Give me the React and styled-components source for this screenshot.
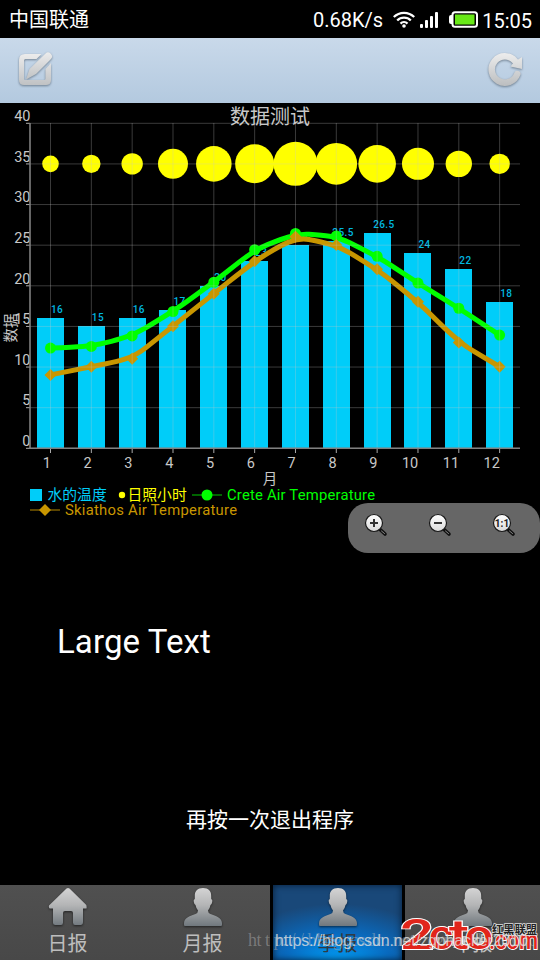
import React from "react";
import styled, { createGlobalStyle } from "styled-components";

const water = [16, 15, 16, 17, 20, 23, 25, 25.5, 26.5, 24, 22, 18];
const sunRadius = [8.3, 9.2, 10.7, 15, 17.8, 19.5, 22, 20.8, 18.8, 16, 13.2, 10.2];
const crete = [12.3, 12.5, 13.8, 16.8, 20.4, 24.4, 26.4, 26.1, 23.6, 20.3, 17.2, 13.9];
const skiathos = [9, 10, 11, 15, 19, 23, 26, 25, 22, 18, 13, 10];
const ticks = [0, 5, 10, 15, 20, 25, 30, 35, 40];

const px = (i) => 50.5 + i * 40.83;
const py = (v) => 345 - v * 8.125;

// each segment bends around the data point and ends a third of the way to the next
function smoothPath(values) {
  const points = values.map((v, i) => [px(i), py(v)]);
  const mix = (a, b, t) => [a[0] + (b[0] - a[0]) * t, a[1] + (b[1] - a[1]) * t];
  let d = `M${points[0].join(" ")}`;
  for (let i = 0; i < points.length - 1; i++) {
    const next = points[i + 1];
    const after = points[i + 2] || next;
    const c1 = mix(points[i], next, 0.67);
    const end = mix(next, after, 0.33);
    d += ` C${c1.join(" ")} ${next.join(" ")} ${end.join(" ")}`;
  }
  return d;
}

function Diamond({ x, y, r = 6 }) {
  return (
    <path
      d={`M${x} ${y - r}L${x + r} ${y}L${x} ${y + r}L${x - r} ${y}Z`}
      fill="#c89600"
    />
  );
}

function Chart() {
  return (
    <ChartSvg width="540" height="417" viewBox="0 0 540 417">
      {water.map((v, i) => (
        <g key={i}>
          <rect
            x={Math.round(px(i) - 13.6)}
            y={Math.round(py(v))}
            width={27}
            height={345 - Math.round(py(v))}
            fill="#00cdf9"
          />
          <BarValue x={px(i) + (v % 1 ? -4 : 0.5)} y={py(v) - 5}>
            {v}
          </BarValue>
        </g>
      ))}
      {sunRadius.map((r, i) => (
        <circle key={i} cx={px(i)} cy={py(35) + 0.2} r={r} fill="#ffff00" />
      ))}
      <path d={smoothPath(crete)} fill="none" stroke="#00ff00" strokeWidth="5" />
      {crete.map((v, i) => (
        <circle key={i} cx={px(i)} cy={py(v)} r="5.5" fill="#00ff00" />
      ))}
      <path d={smoothPath(skiathos)} fill="none" stroke="#c89600" strokeWidth="5" />
      {skiathos.map((v, i) => (
        <Diamond key={i} x={px(i)} y={py(v)} />
      ))}

      {ticks.map((v) => (
        <g key={v}>
          <line x1="30" x2="520" y1={py(v) + 0.3} y2={py(v) + 0.3} stroke="#c8c8c8" strokeOpacity="0.29" />
          <line x1="26" x2="30" y1={py(v) + 0.3} y2={py(v) + 0.3} stroke="#aaa" />
          <AxisText x="30.5" y={py(v) - 2} textAnchor="end">
            {v}
          </AxisText>
        </g>
      ))}
      {water.map((_, i) => (
        <g key={i}>
          <line x1={px(i)} x2={px(i)} y1="20" y2="345" stroke="#c8c8c8" strokeOpacity="0.29" />
          <line x1={px(i)} x2={px(i)} y1="345" y2="350" stroke="#aaa" />
          <AxisText x={px(i) + 0.3} y="365" textAnchor="end">
            {i + 1}
          </AxisText>
        </g>
      ))}
      <line x1="30" x2="30" y1="20" y2="346" stroke="#808080" strokeWidth="1.6" />
      <line x1="29" x2="520" y1="345.2" y2="345.2" stroke="#808080" strokeWidth="1.6" />

      <ChartTitle x="270" y="21" textAnchor="middle">数据测试</ChartTitle>
      <AxisText x="270" y="381" textAnchor="middle">月</AxisText>
      <AxisText transform="translate(15.5 225) rotate(-90)" textAnchor="middle">
        数据
      </AxisText>

      <rect x="30" y="386" width="12" height="12" fill="#00cdf9" />
      <LegendText x="47.5" y="397" fill="#00cdf9">水的温度</LegendText>
      <circle cx="122" cy="392" r="3.2" fill="#ffff00" />
      <LegendText x="127.5" y="397" fill="#ffff00">日照小时</LegendText>
      <line x1="192" x2="222" y1="392" y2="392" stroke="#00a800" strokeWidth="1.2" />
      <circle cx="207" cy="392" r="5.5" fill="#00ff00" />
      <LegendText x="227" y="397" fill="#00ff00" textLength="148">
        Crete Air Temperature
      </LegendText>
      <line x1="30" x2="60" y1="407" y2="407" stroke="#9a7400" strokeWidth="1.2" />
      <Diamond x={45} y={407} />
      <LegendText x="65" y="412" fill="#c89600" textLength="172">
        Skiathos Air Temperature
      </LegendText>
    </ChartSvg>
  );
}

function EditIcon() {
  return (
    <HeaderIcon width="38" height="40" viewBox="0 0 38 40">
      <defs>
        <linearGradient id="silver" x1="0" y1="0" x2="0" y2="1">
          <stop offset="0" stopColor="#ececec" />
          <stop offset="1" stopColor="#c0c2c4" />
        </linearGradient>
      </defs>
      <path
        fill="url(#silver)"
        d="M8 2H24.500L19.500 7H8.500Q7 7 7 8.500V27Q7 28 8.500 28H27Q28.500 28 28.500 26.500V17L34 11V28Q34 33 29 33H7Q2 33 2 28V8Q2 2 8 2Z"
      />
      <path
        fill="url(#silver)"
        d="M28.500 1.500Q31 -1 33.500 1.500Q36.500 4 34 7L19 22L9 27.500L12.500 17Z"
      />
    </HeaderIcon>
  );
}

function RefreshIcon() {
  return (
    <HeaderIcon width="36" height="40" viewBox="0 0 36 40">
      <defs>
        <linearGradient id="ring" gradientUnits="userSpaceOnUse" x1="0" y1="1" x2="0" y2="35">
          <stop offset="0" stopColor="#ededed" />
          <stop offset="1" stopColor="#babcbe" />
        </linearGradient>
      </defs>
      <path
        d="M29.300 22A13.200 13.200 0 1 1 27 9"
        fill="none"
        stroke="url(#ring)"
        strokeWidth="6.500"
        strokeLinecap="round"
      />
      <path d="M34 5V17L22.500 14.500L26 10Z" fill="url(#ring)" />
    </HeaderIcon>
  );
}

function WifiIcon() {
  return (
    <svg width="22" height="17" viewBox="0 0 22 17">
      <g fill="none" stroke="#fff" strokeWidth="2.300">
        <path d="M.8 6A14.500 14.500 0 0 1 21.200 6" />
        <path d="M4.200 9.500A9.600 9.600 0 0 1 17.800 9.500" />
        <path d="M7.500 12.600A5 5 0 0 1 14.500 12.600" />
      </g>
      <circle cx="11" cy="15" r="1.800" fill="#fff" />
    </svg>
  );
}

function SignalIcon() {
  return (
    <svg width="18" height="17" viewBox="0 0 18 17" fill="#fff">
      <rect x="0" y="13" width="3" height="4" rx="1" />
      <rect x="5" y="9" width="3" height="8" rx="1" />
      <rect x="10" y="5" width="3" height="12" rx="1" />
      <rect x="15" y="1" width="3" height="16" rx="1" />
    </svg>
  );
}

function BatteryIcon() {
  return (
    <svg width="29" height="17" viewBox="0 0 29 17">
      <rect x="0" y="4" width="5" height="9" rx="2" fill="#fff" />
      <rect x="3.500" y="1.200" width="24.500" height="14.600" rx="2.500" fill="#000" stroke="#fff" strokeWidth="2" />
      <rect x="6" y="3.500" width="19.500" height="10" fill="#68e817" />
    </svg>
  );
}

function MagnifierIcon({ kind }) {
  return (
    <svg width="24" height="24" viewBox="0 0 24 24">
      <path d="M15.500 16L21 21" stroke="#111" strokeWidth="3.600" strokeLinecap="round" />
      <path d="M17.500 18L20.500 20.500" stroke="#888" strokeWidth="1" strokeLinecap="round" />
      <circle cx="10" cy="10" r="8.500" fill="url(#lens)" stroke="#191919" strokeWidth="1.200" />
      <defs>
        <linearGradient id="lens" x1="0" y1="0" x2="0" y2="1">
          <stop offset="0" stopColor="#fff" />
          <stop offset="1" stopColor="#dadada" />
        </linearGradient>
      </defs>
      {kind !== "reset" && <path d="M6 10H14" stroke="#333" strokeWidth="2" />}
      {kind === "in" && <path d="M10 6V14" stroke="#333" strokeWidth="2" />}
      {kind === "reset" && (
        <LensText x="10" y="13.500" textAnchor="middle">
          1:1
        </LensText>
      )}
    </svg>
  );
}

function TabIcon({ home }) {
  return (
    <IconShadow width="40" height="40" viewBox="0 0 40 40">
      <defs>
        <linearGradient id="steel" gradientUnits="userSpaceOnUse" x1="0" y1="0" x2="0" y2="40">
          <stop offset="0" stopColor="#d6d6d6" />
          <stop offset="0.45" stopColor="#b4b5b6" />
          <stop offset="1" stopColor="#6d757b" />
        </linearGradient>
      </defs>
      {home ? (
        <path
          fill="url(#steel)"
          d="M18.500 1.600Q20 .5 21.500 1.600L38.300 18Q39 21 38.300 21.500H35V35Q35 38 32.500 38H27Q25 38 25 35.500V26Q25 24 23 24H17Q15 24 15 26V35.500Q15 38 13 38H7.500Q5 38 5 35.500V21.500H1.700Q.5 21 1 18.500Z"
        />
      ) : (
        <path
          fill="url(#steel)"
          d="M20 1C25.500 1 28.500 4 28.200 9.500V12Q29.800 12.500 29.200 15Q28.800 17.500 27.500 18Q27 21 25 23.500Q25 26 27.500 27C33 29 38.500 30.500 39 36V38Q39 39 38 39H2Q1 39 1 38V36C1.500 30.500 7 29 12.500 27Q15 26 15 23.500Q13 21 12.500 18Q11.200 17.500 10.800 15Q10.200 12.500 11.800 12V9.500C11.500 4 14.500 1 20 1Z"
        />
      )}
    </IconShadow>
  );
}

const tabs = [
  { label: "日报", home: true },
  { label: "月报" },
  { label: "季报", active: true },
  { label: "年报" },
];

const serifUrl = "http://blog.csdn.net/zgphacker2010";
const serifX = serifUrl.split("").map((_, i) => 8 + i * 8.5).join(" ");

function App() {
  return (
    <Screen>
      <GlobalStyle />
      <StatusBar>
        <Carrier>中国联通</Carrier>
        <Speed>0.68K/s</Speed>
        <StatusIcons>
          <WifiIcon />
          <SignalIcon />
          <BatteryIcon />
        </StatusIcons>
        <Clock>15:05</Clock>
      </StatusBar>
      <Header>
        <EditIcon />
        <RefreshIcon />
      </Header>
      <Chart />
      <ZoomControls>
        <MagnifierIcon kind="in" />
        <MagnifierIcon kind="out" />
        <MagnifierIcon kind="reset" />
      </ZoomControls>
      <LargeText>Large Text</LargeText>
      <Toast>再按一次退出程序</Toast>
      <TabBar>
        {tabs.map((tab) => (
          <Tab key={tab.label} $active={tab.active}>
            <TabIcon home={tab.home} />
            <TabLabel $active={tab.active}>{tab.label}</TabLabel>
          </Tab>
        ))}
      </TabBar>
      <Watermark width="300" height="50" viewBox="0 0 300 50">
        <SerifMark x={serifX} y="36">{serifUrl}</SerifMark>
        <Logo>
          <text x="160" y="38.500" fontSize="42" textLength="34" lengthAdjust="spacingAndGlyphs">2</text>
          <text x="189" y="38.500" fontSize="40" textLength="24" lengthAdjust="spacingAndGlyphs">c</text>
          <text x="209" y="38.500" fontSize="40" textLength="20" lengthAdjust="spacingAndGlyphs">t</text>
          <text x="225" y="38.500" fontSize="41" textLength="28" lengthAdjust="spacingAndGlyphs">o</text>
          <text x="249" y="38.500" fontSize="25" textLength="49" lengthAdjust="spacingAndGlyphs">.com</text>
        </Logo>
        <LogoCaption x="252" y="23.500" textLength="45">红黑联盟</LogoCaption>
        <SansMark x="35" y="36" textLength="253">https://blog.csdn.net/zgphacker2010</SansMark>
      </Watermark>
    </Screen>
  );
}

export default App;

const GlobalStyle = createGlobalStyle`
  body {
    margin: 0;
    background: #000;
    font-family: Roboto, "Noto Sans CJK SC", sans-serif;
  }
`;

const Screen = styled.div`
  position: relative;
  display: flex;
  flex-direction: column;
  width: 540px;
  height: 960px;
  overflow: hidden;
  background: #000;
`;

const StatusBar = styled.div`
  display: flex;
  align-items: center;
  box-sizing: border-box;
  height: 38px;
  padding: 0 8px 0 9px;
  color: #fff;
  font-size: 20px;
  line-height: 38px;
`;

const Carrier = styled.span`
  flex: 1;
  padding-top: 2px;
`;

const Speed = styled.span`
  margin-right: 10px;
  padding-top: 2px;
`;

const StatusIcons = styled.div`
  display: flex;
  align-items: center;
  margin-right: 4px;
  padding-top: 1px;

  svg + svg {
    margin-left: 5px;
  }
  svg:last-child {
    margin-left: 11px;
  }
`;

const Clock = styled.span`
  padding-top: 3px;
`;

const Header = styled.header`
  display: flex;
  justify-content: space-between;
  box-sizing: border-box;
  height: 65px;
  padding: 14px 16px 0 17px;
  background: linear-gradient(#c9d9ea, #b3c9df);
`;

const HeaderIcon = styled.svg`
  overflow: visible;
  filter: drop-shadow(0 1px 1px rgba(60, 75, 90, 0.6));
`;

const ChartSvg = styled.svg`
  display: block;
  flex: none;
`;

const AxisText = styled.text`
  font-size: 14.5px;
  fill: #c8c8c8;
`;

const ChartTitle = styled.text`
  font-size: 20px;
  fill: #c8c8c8;
`;

const BarValue = styled.text`
  font-size: 10px;
  font-weight: 500;
  letter-spacing: 0.4px;
  fill: #00b8e0;
`;

const LegendText = styled.text`
  font-size: 14.8px;
`;

const ZoomControls = styled.div`
  display: flex;
  align-self: flex-end;
  flex: none;
  gap: 40px;
  box-sizing: border-box;
  width: 192px;
  height: 50px;
  margin-top: -17px;
  padding: 10px 0 0 16px;
  border-radius: 20px;
  background: #666;
`;

const LensText = styled.text`
  font-size: 10px;
  font-weight: 700;
  fill: #222;
`;

const LargeText = styled.p`
  margin: 68px 0 0 57px;
  color: #fff;
  font-size: 33px;
  line-height: 42px;
  letter-spacing: 0.1px;
`;

const Toast = styled.p`
  margin: 142px 0 0;
  color: #fff;
  font-size: 21px;
  line-height: 30px;
  text-align: center;
`;

const TabBar = styled.nav`
  display: flex;
  flex: none;
  height: 75px;
  margin-top: auto;
  background: linear-gradient(#505050, #484848);
`;

const Tab = styled.div`
  display: flex;
  flex: none;
  flex-direction: column;
  align-items: center;
  box-sizing: border-box;
  width: 135px;
  padding-top: 2px;
  border: solid #000;
  border-width: ${(props) => (props.$active ? "0 3px" : "0")};
  background: ${(props) =>
    props.$active
      ? "radial-gradient(ellipse 85% 80% at 50% 105%, #00a5ff, #096bc0 50%, #194879)"
      : "none"};
  box-shadow: ${(props) => (props.$active ? "inset 0 0 7px #061d36" : "none")};
`;

const IconShadow = styled.svg`
  flex: none;
  filter: drop-shadow(0 1px 1px rgba(0, 0, 0, 0.55));
`;

const TabLabel = styled.span`
  color: ${(props) => (props.$active ? "#303a43" : "#bdbdbd")};
  font-size: 20px;
  line-height: 34px;
`;

const Watermark = styled.svg`
  position: absolute;
  right: 0;
  bottom: 0;
`;

const SerifMark = styled.text`
  font-family: "Liberation Serif", serif;
  font-size: 18px;
  fill: rgba(190, 190, 190, 0.42);
`;

const SansMark = styled.text`
  font-family: "Liberation Sans", sans-serif;
  font-size: 16px;
  fill: rgba(225, 225, 225, 0.8);
`;

const Logo = styled.g`
  font-family: Roboto, sans-serif;
  font-weight: 500;
  fill: #e1251b;
  stroke: #fff;
  stroke-width: 1.8px;
  paint-order: stroke;
`;

const LogoCaption = styled.text`
  font-size: 11px;
  font-weight: 700;
  fill: #222;
  stroke: #ddd;
  stroke-width: 1.5px;
  paint-order: stroke;
`;
